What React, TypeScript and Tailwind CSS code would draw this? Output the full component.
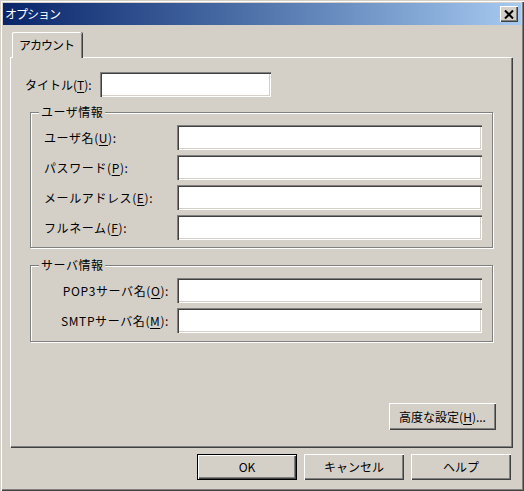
import type { ReactNode } from 'react';

// Win2000-style bevels
const RAISED = 'shadow-[inset_1px_1px_0_#fff,inset_-1px_-1px_0_#404040,inset_-2px_-2px_0_#808080]';
const SUNKEN = 'shadow-[inset_1px_1px_0_#808080,inset_2px_2px_0_#404040,inset_-1px_-1px_0_#fff,inset_-2px_-2px_0_#d4d0c8]';

function Acc({ text, k, tail = ':' }: { text: string; k: string; tail?: string }) {
  return (
    <>
      {text}(<span className="underline underline-offset-2">{k}</span>){tail}
    </>
  );
}

function TextBox({ className = '' }: { className?: string }) {
  return <div className={`h-[25px] bg-white ${SUNKEN} ${className}`} />;
}

function Button({ children, isDefault, className = '' }: { children: ReactNode; isDefault?: boolean; className?: string }) {
  return (
    <div
      className={`flex items-center justify-center bg-[#d4d0c8] ${isDefault ? 'border border-black' : ''} ${className}`}
    >
      <div className={`flex h-full w-full items-center justify-center ${RAISED}`}>{children}</div>
    </div>
  );
}

function GroupBox({ title, children, className = '' }: { title: string; children: ReactNode; className?: string }) {
  return (
    <div
      className={`relative ml-[19px] w-[463px] border border-[#808080] shadow-[inset_1px_1px_0_#fff,1px_1px_0_#fff] ${className}`}
    >
      <span className="absolute -top-[9px] left-[8px] bg-[#d4d0c8] px-[2px] leading-[16px] tracking-[0.5px]">{title}</span>
      {children}
    </div>
  );
}

function Row({ label, alignRight }: { label: ReactNode; alignRight?: boolean }) {
  return (
    <div className="flex h-[25px] items-center">
      <div className={`w-[146px] pl-[13px] tracking-[0.6px] ${alignRight ? 'pr-[8px] text-right' : ''}`}>{label}</div>
      <TextBox className="w-[305px]" />
    </div>
  );
}

export default function App() {
  return (
    <div className="h-[491px] w-[524px] bg-[#d4d0c8] p-[3px] font-['Noto_Sans_CJK_JP',sans-serif] text-[12px] text-black shadow-[inset_1px_1px_0_#d4d0c8,inset_2px_2px_0_#fff,inset_-1px_-1px_0_#404040,inset_-2px_-2px_0_#808080]">
      <div className="flex flex-col">
        {/* Title bar */}
        <div className="flex h-[22px] items-center justify-between bg-gradient-to-r from-[#0a246a] to-[#a6caf0] pl-[2px] pr-[3px]">
          <span className="text-[12px] leading-none tracking-[-1px] text-white">オプション</span>
          <div className={`flex h-[16px] w-[18px] items-center justify-center bg-[#d4d0c8] ${RAISED}`}>
            <svg width="10" height="9" viewBox="0 0 10 9">
              <path d="M1 0.5 L9 8.5 M9 0.5 L1 8.5" stroke="#000" strokeWidth="2" />
            </svg>
          </div>
        </div>

        {/* Tab strip */}
        <div className="ml-[7px] mt-[7px] flex flex-col">
          <div className="relative z-10 -mb-px ml-[2px] flex h-[26px] w-[70px] items-center rounded-t-[2px] border-l border-t border-white bg-[#d4d0c8] pb-[2px] pl-[6px] tracking-[-1px] shadow-[inset_-1px_0_0_#808080,1px_0_0_#404040]">
            アカウント
          </div>

          {/* Tab panel */}
          <div className="flex h-[390px] w-[502px] flex-col border-l border-t border-white shadow-[inset_-1px_-1px_0_#808080,1px_1px_0_#404040]">
            <div className="ml-[14px] mt-[14px] flex h-[25px] items-center">
              <div className="w-[75px]">
                <Acc text="タイトル" k="T" />
              </div>
              <TextBox className="w-[171px]" />
            </div>

            <GroupBox title="ユーザ情報" className="mt-[15px]">
              <div className="flex flex-col gap-[5px] pb-[7px] pt-[12px]">
                <Row label={<Acc text="ユーザ名" k="U" />} />
                <Row label={<Acc text="パスワード" k="P" />} />
                <Row label={<Acc text="メールアドレス" k="E" />} />
                <Row label={<Acc text="フルネーム" k="F" />} />
              </div>
            </GroupBox>

            <GroupBox title="サーバ情報" className="mt-[17px]">
              <div className="flex flex-col gap-[5px] pb-[8px] pt-[12px]">
                <Row alignRight label={<Acc text="POP3サーバ名" k="O" />} />
                <Row alignRight label={<Acc text="SMTPサーバ名" k="M" />} />
              </div>
            </GroupBox>

            <div className="mr-[16px] mt-[61px] flex justify-end">
              <Button className="h-[27px] w-[107px]">
                <span>
                  <Acc text="高度な設定" k="H" tail="..." />
                </span>
              </Button>
            </div>
          </div>
        </div>

        {/* Dialog buttons */}
        <div className="mt-[7px] flex justify-end gap-[7px] pr-[10px]">
          <Button isDefault className="h-[26px] w-[100px]">OK</Button>
          <Button className="h-[26px] w-[100px]">キャンセル</Button>
          <Button className="h-[26px] w-[100px]">ヘルプ</Button>
        </div>
      </div>
    </div>
  );
}
